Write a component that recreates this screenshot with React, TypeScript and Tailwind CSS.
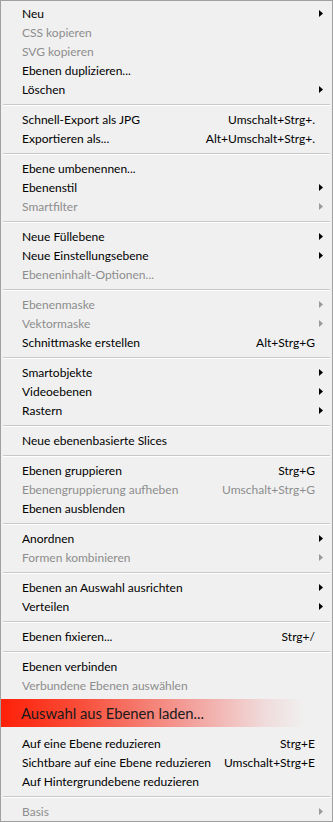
import React from "react";

type Item = { label: string; shortcut?: string; sub?: boolean; disabled?: boolean };

const groups: Item[][] = [
  [
    { label: "Neu", sub: true },
    { label: "CSS kopieren", disabled: true },
    { label: "SVG kopieren", disabled: true },
    { label: "Ebenen duplizieren..." },
    { label: "Löschen", sub: true },
  ],
  [
    { label: "Schnell-Export als JPG", shortcut: "Umschalt+Strg+." },
    { label: "Exportieren als...", shortcut: "Alt+Umschalt+Strg+." },
  ],
  [
    { label: "Ebene umbenennen..." },
    { label: "Ebenenstil", sub: true },
    { label: "Smartfilter", sub: true, disabled: true },
  ],
  [
    { label: "Neue Füllebene", sub: true },
    { label: "Neue Einstellungsebene", sub: true },
    { label: "Ebeneninhalt-Optionen...", disabled: true },
  ],
  [
    { label: "Ebenenmaske", sub: true, disabled: true },
    { label: "Vektormaske", sub: true, disabled: true },
    { label: "Schnittmaske erstellen", shortcut: "Alt+Strg+G" },
  ],
  [
    { label: "Smartobjekte", sub: true },
    { label: "Videoebenen", sub: true },
    { label: "Rastern", sub: true },
  ],
  [{ label: "Neue ebenenbasierte Slices" }],
  [
    { label: "Ebenen gruppieren", shortcut: "Strg+G" },
    { label: "Ebenengruppierung aufheben", shortcut: "Umschalt+Strg+G", disabled: true },
    { label: "Ebenen ausblenden" },
  ],
  [
    { label: "Anordnen", sub: true },
    { label: "Formen kombinieren", sub: true, disabled: true },
  ],
  [
    { label: "Ebenen an Auswahl ausrichten", sub: true },
    { label: "Verteilen", sub: true },
  ],
  [{ label: "Ebenen fixieren...", shortcut: "Strg+/" }],
];

const group12: Item[] = [
  { label: "Ebenen verbinden" },
  { label: "Verbundene Ebenen auswählen", disabled: true },
];

const group13: Item[] = [
  { label: "Auf eine Ebene reduzieren", shortcut: "Strg+E" },
  { label: "Sichtbare auf eine Ebene reduzieren", shortcut: "Umschalt+Strg+E" },
  { label: "Auf Hintergrundebene reduzieren" },
];

const Arrow = ({ disabled }: { disabled?: boolean }) => (
  <svg width="4" height="7" viewBox="0 0 4 7" className="absolute right-[9px] top-[6px]">
    <path d="M0 0 L4 3.5 L0 7 Z" fill={disabled ? "#9a9a9a" : "#000"} />
  </svg>
);

const Row = ({ item }: { item: Item }) => (
  <div
    className={`relative flex h-[19px] items-center pl-[21px] pr-[17px] text-[12px] leading-none ${
      item.disabled ? "text-[#8d8d8d]" : "text-[#000]"
    }`}
  >
    <span className="flex-1 whitespace-nowrap">{item.label}</span>
    {item.shortcut && <span className="whitespace-nowrap">{item.shortcut}</span>}
    {item.sub && <Arrow disabled={item.disabled} />}
  </div>
);

const Sep = () => (
  <div className="flex h-[11px] items-center px-[2px]">
    <div className="h-[2px] w-full border-t border-[#c9c9c9] border-b border-b-[#ffffff]" />
  </div>
);

export default function App() {
  return (
    <div
      className="h-[822px] w-[333px] overflow-hidden border border-[#a0a0a0] bg-[#f0f0f0] pt-[3px]"
      style={{ fontFamily: "Lato, 'Liberation Sans', sans-serif" }}
    >
      {groups.map((g, i) => (
        <React.Fragment key={i}>
          {g.map((it, j) => (
            <Row key={j} item={it} />
          ))}
          <Sep />
        </React.Fragment>
      ))}
      {group12.map((it, j) => (
        <Row key={j} item={it} />
      ))}
      <div className="mb-[7px] mt-[4px] flex h-[28px] items-center bg-[linear-gradient(to_right,#ff2008_0%,#f8503c_25%,#f39a94_55%,#f0dcdc_80%,#f0f0f0_92%)] pl-[20px] text-[14.8px] text-[#1a1a1a]">
        Auswahl aus Ebenen laden...
      </div>
      {group13.map((it, j) => (
        <Row key={j} item={it} />
      ))}
      <Sep />
      <Row item={{ label: "Basis", sub: true, disabled: true }} />
    </div>
  );
}
